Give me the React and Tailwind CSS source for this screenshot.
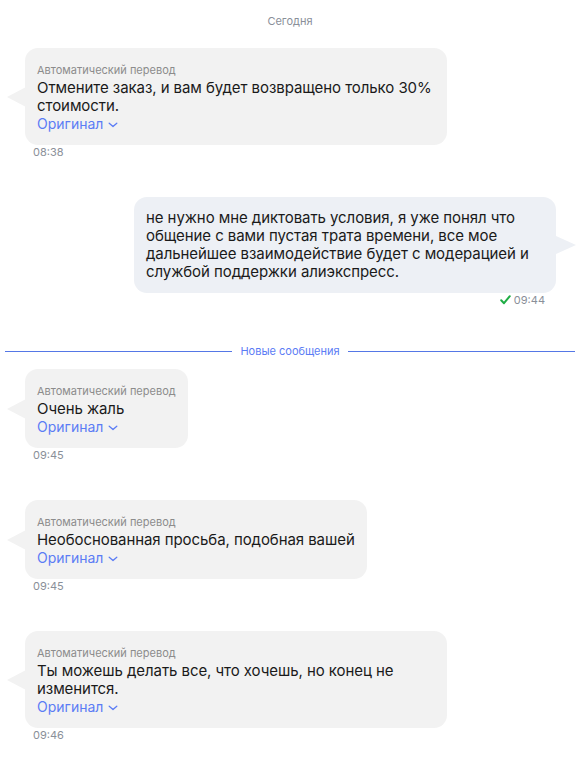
import React from 'react';

const ChevronDown = () => (
  <svg width="10" height="6" viewBox="0 0 10 6" fill="none" className="ml-[5px] mt-[1px]">
    <path d="M1.2 1.2l3.8 3.3 3.8-3.3" stroke="#5b7cf5" strokeWidth="1.3" strokeLinecap="round" strokeLinejoin="round" />
  </svg>
);

const Check = () => (
  <svg width="11" height="10" viewBox="0 0 11 10" fill="none" className="mr-[3px]">
    <path d="M1.2 5.2l2.8 3L9.8 1.2" stroke="#1fad45" strokeWidth="2" strokeLinecap="round" strokeLinejoin="round" />
  </svg>
);

const IncomingMessage = ({ text, time }) => (
  <div className="flex flex-col items-start">
    <div className="relative ml-[25px] max-w-[422px] rounded-[13px] bg-[#f2f2f2] pl-3 pr-3 pt-[15px] pb-[12px]">
      {/* tail */}
      <div className="absolute left-[-18px] top-1/2 h-0 w-0 -translate-y-1/2 border-y-[10px] border-r-[19px] border-y-transparent border-r-[#f2f2f2]" />
      <div className="text-[11px] leading-[14px] text-[#8c8c8c]">Автоматический перевод</div>
      <div className="mt-[2px] text-[15px] leading-[18px] tracking-[-0.07px] text-[#1a1a1a]">{text}</div>
      <div className="flex items-center text-[14px] leading-[18px] text-[#5b7cf5]">
        Оригинал
        <ChevronDown />
      </div>
    </div>
    <div className="ml-[33px] text-[11px] leading-[14px] text-[#8a8f99]">{time}</div>
  </div>
);

const OutgoingMessage = ({ text, time }) => (
  <div className="flex flex-col items-end">
    <div className="relative mr-[24px] max-w-[422px] rounded-[13px] bg-[#edf0f5] px-3 pt-[12px] pb-[12px]">
      <div className="absolute right-[-20px] top-1/2 h-0 w-0 -translate-y-1/2 border-y-[9px] border-l-[20px] border-y-transparent border-l-[#edf0f5]" />
      <div className="text-[15px] leading-[18px] tracking-[-0.07px] text-[#1a1a1a]">{text}</div>
    </div>
    <div className="mr-[35px] flex items-center text-[11px] leading-[14px] text-[#8a8f99]">
      <Check />
      {time}
    </div>
  </div>
);

export default function App() {
  return (
    <div className="w-[580px] min-h-[762px] bg-white font-['Inter',sans-serif]">
      <div className="pt-[14px] text-center text-[11px] leading-[14px] text-[#8a8f99]">Сегодня</div>

      <div className="mt-[20px]">
        <IncomingMessage
          text="Отмените заказ, и вам будет возвращено только 30% стоимости."
          time="08:38"
        />
      </div>

      <div className="mt-[38px]">
        <OutgoingMessage
          text="не нужно мне диктовать условия, я уже понял что общение с вами пустая трата времени, все мое дальнейшее взаимодействие будет с модерацией и службой поддержки алиэкспресс."
          time="09:44"
        />
      </div>

      {/* new messages divider */}
      <div className="mt-[37px] mx-[5px] flex items-center gap-2">
        <div className="h-px flex-1 bg-[#5577e6]" />
        <div className="text-[11px] leading-[14px] text-[#5b7cf5]">Новые сообщения</div>
        <div className="h-px flex-1 bg-[#5577e6]" />
      </div>

      <div className="mt-[11px]">
        <IncomingMessage text="Очень жаль" time="09:45" />
      </div>

      <div className="mt-[38px]">
        <IncomingMessage text="Необоснованная просьба, подобная вашей" time="09:45" />
      </div>

      <div className="mt-[38px]">
        <IncomingMessage
          text="Ты можешь делать все, что хочешь, но конец не изменится."
          time="09:46"
        />
      </div>
    </div>
  );
}
